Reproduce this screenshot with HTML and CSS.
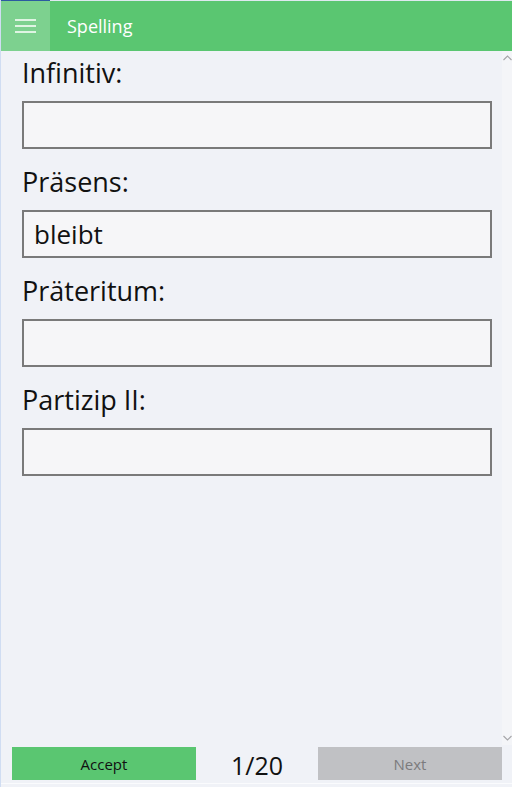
FILE: index.html
```html
<!DOCTYPE html>
<html lang="de">
<head>
<meta charset="utf-8">
<title>Spelling</title>
<link rel="stylesheet" href="styles.css">
</head>
<body>
<div class="app">
  <header class="titlebar">
    <button class="menu" aria-label="Menu">
      <svg width="21" height="14" viewBox="0 0 21 14"><path d="M0 1h21M0 7h21M0 13h21" stroke="#fff" stroke-width="1.6"/></svg>
    </button>
    <div class="title">Spelling</div>
  </header>
  <div class="body">
    <main class="form">
      <div class="group">
        <label class="label">Infinitiv:</label>
        <div class="input"></div>
      </div>
      <div class="group">
        <label class="label">Präsens:</label>
        <div class="input">bleibt</div>
      </div>
      <div class="group">
        <label class="label">Präteritum:</label>
        <div class="input"></div>
      </div>
      <div class="group">
        <label class="label">Partizip II:</label>
        <div class="input"></div>
      </div>
    </main>
    <div class="scrollbar">
      <svg class="chev" width="9" height="6" viewBox="0 0 9 6"><path d="M0.5 5L4.5 1L8.5 5" fill="none" stroke="#a5a5a8" stroke-width="1.1"/></svg>
      <svg class="chev" width="9" height="6" viewBox="0 0 9 6"><path d="M0.5 1L4.5 5L8.5 1" fill="none" stroke="#a5a5a8" stroke-width="1.1"/></svg>
    </div>
  </div>
  <footer class="bottombar">
    <button class="btn accept">Accept</button>
    <div class="counter">1/20</div>
    <button class="btn next">Next</button>
  </footer>
</div>
</body>
</html>
```
FILE: styles.css
```css
html, body {
  margin: 0;
  padding: 0;
  height: 100%;
}
body {
  background: #f0f2f7;
  font-family: "Open Sans", "Noto Sans", sans-serif;
  color: #111;
}
.app {
  height: 787px;
  display: flex;
  flex-direction: column;
  border-left: 1px solid #d0ddf2;
  box-sizing: border-box;
}
.titlebar {
  display: flex;
  height: 51px;
  flex: none;
}
.menu {
  width: 49px;
  height: 51px;
  box-sizing: border-box;
  border: 0;
  border-top: 1px solid #2c5aa0;
  background: #7dd18f;
  padding: 0;
  display: flex;
  align-items: center;
  justify-content: center;
}
.menu svg {
  margin-top: -1px;
}
.title {
  flex: 1;
  box-sizing: border-box;
  border-top: 1px solid #dfe9f0;
  background: #5ac671;
  color: #fff;
  font-size: 18px;
  line-height: 51px;
  padding-left: 17px;
}
.body {
  flex: 1;
  display: flex;
  min-height: 0;
}
.form {
  flex: 1;
  padding: 2px 10px 0 21px;
}
.group {
  margin-top: 13px;
}
.group:first-child {
  margin-top: 0;
}
.label {
  display: block;
  font-size: 27px;
  line-height: 40px;
  margin-bottom: 8px;
  color: #111;
}
.input {
  height: 48px;
  box-sizing: border-box;
  border: 2px solid #7a7a7a;
  background: #f6f6f8;
  font-size: 26px;
  line-height: 44px;
  padding-left: 10px;
  color: #111;
}
.scrollbar {
  width: 10px;
  background: #f4f5f8;
  display: flex;
  flex-direction: column;
  justify-content: space-between;
  align-items: center;
  padding: 4px 0 4px;
}
.bottombar {
  flex: none;
  height: 39px;
  display: flex;
  align-items: flex-start;
  padding: 2px 10px 0 11px;
  box-sizing: border-box;
  border-bottom: 1px solid #fafbfd;
  margin-bottom: 3px;
}
.btn {
  width: 184px;
  height: 33px;
  border: 0;
  font-family: "Open Sans", "Noto Sans", sans-serif;
  font-size: 15px;
  padding: 0;
}
.accept {
  background: #5ac671;
  color: #111;
}
.next {
  background: #c0c1c4;
  color: #7b7b7d;
}
.counter {
  flex: 1;
  text-align: center;
  font-size: 25px;
  line-height: 36px;
  color: #111;
}
```
